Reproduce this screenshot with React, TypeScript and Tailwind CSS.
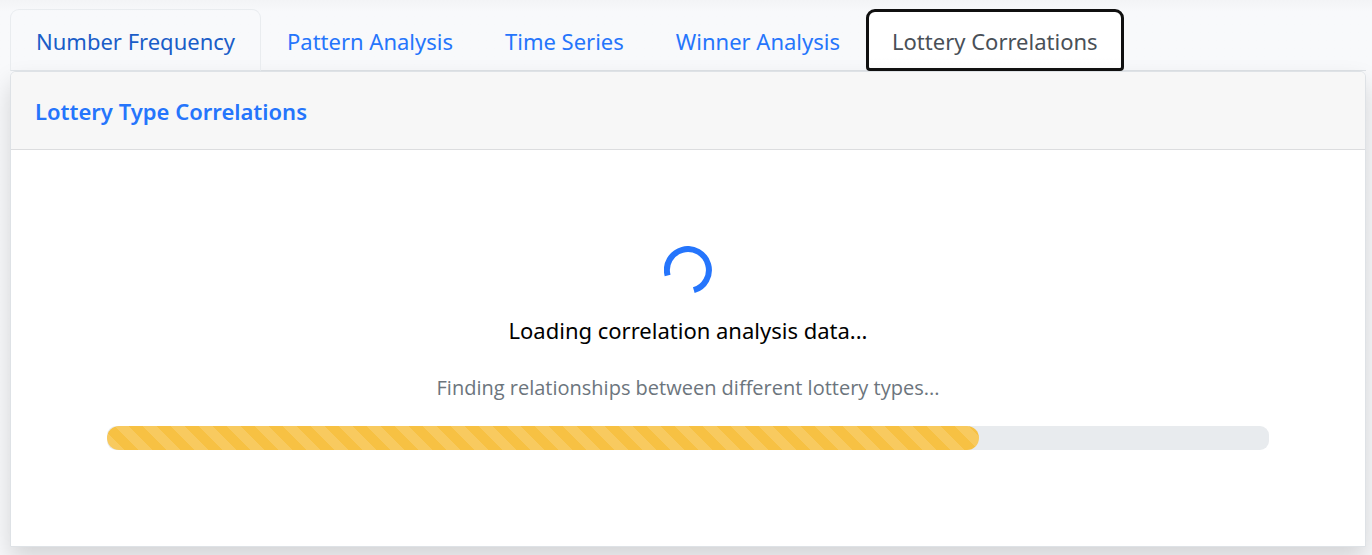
const tabs = [
  { label: "Number Frequency", look: "text-[#1a5dc8] border-[#e9ecef] border-b-[#dee2e6]" },
  { label: "Pattern Analysis", look: "text-[#2575fc] border-transparent" },
  { label: "Time Series", look: "text-[#2575fc] border-transparent" },
  { label: "Winner Analysis", look: "text-[#2575fc] border-transparent" },
  {
    label: "Lottery Correlations",
    look: "relative z-10 rounded-b-sm border-transparent bg-linear-to-b from-white from-80% to-[#fafafa] text-[#495057] outline-3 -outline-offset-3 outline-[#101010]",
  },
];

export default function App() {
  return (
    <main className="min-h-screen overflow-hidden bg-[#f8f9fa] bg-linear-to-b from-[#f3f4f6] to-[#f8f9fb] to-[12px] pr-1.5 pb-2 pl-2.5 pt-[9px] font-['Noto_Sans',sans-serif] text-[22px] leading-9">
      <div role="tablist" className="flex border-b border-[#dee2e6]">
        {tabs.map((tab, i) => (
          <button
            key={tab.label}
            type="button"
            role="tab"
            aria-selected={i === 4}
            className={`-mb-px rounded-t-[9px] border px-[25px] pt-[13px] pb-[11px] whitespace-nowrap ${tab.look}`}
          >
            {tab.label}
          </button>
        ))}
      </div>
      <section className="rounded-t-[6px] border border-[#dee2e6] bg-white shadow-[0_12px_24px_rgba(0,0,0,0.15)]">
        <header className="rounded-t-[5px] border-b border-[#dcdddf] bg-[#f7f7f7] px-6 pt-[21px] pb-5">
          <h2 className="font-semibold text-[#2575fc]">Lottery Type Correlations</h2>
        </header>
        <div className="flex flex-col items-center px-24 py-24 text-center" role="status">
          <svg className="size-12" viewBox="0 0 48 48" fill="none" aria-hidden="true">
            <path d="M3.6 29.4A21 21 0 1 1 29.8 44.2" stroke="#2575fc" strokeWidth="6" />
          </svg>
          <p className="mt-[18px] text-black">Loading correlation analysis data...</p>
          <p className="mt-[22px] font-['Open_Sans',sans-serif] text-[20px] text-[#6c757d]">
            Finding relationships between different lottery types...
          </p>
          <div
            role="progressbar"
            aria-label="Loading progress"
            aria-valuenow={75}
            className="mt-5 h-6 w-full overflow-hidden rounded-[9px] bg-[#e8ebee]"
          >
            <div className="h-full w-3/4 rounded-[12px] bg-[#f7c143] bg-[linear-gradient(45deg,rgba(255,255,255,0.15)_25%,transparent_25%,transparent_50%,rgba(255,255,255,0.15)_50%,rgba(255,255,255,0.15)_75%,transparent_75%,transparent)] bg-size-[28px_28px] bg-position-[8px_0px]" />
          </div>
        </div>
      </section>
    </main>
  );
}
